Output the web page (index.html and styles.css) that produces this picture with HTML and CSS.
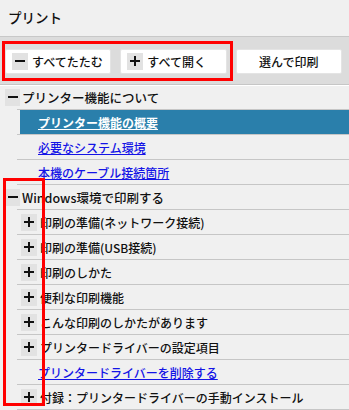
FILE: index.html
```html
<!DOCTYPE html>
<html lang="ja">

<head>
    <meta charset="UTF-8">
    <meta name="viewport" content="width=device-width, initial-scale=1.0">
    <title>プリント</title>
    <link rel="stylesheet" href="styles.css">
</head>

<body>
    <div class="header">プリント</div>

    <div class="toolbar">
        <button class="tool-btn"><span class="icon"><svg width="10" height="10" viewBox="0 0 10 10"><path d="M0 5H10" stroke="#111" stroke-width="2"/></svg></span>すべてたたむ</button>
        <button class="tool-btn"><span class="icon"><svg width="10" height="10" viewBox="0 0 10 10"><path d="M0 5H10M5 0V10" stroke="#111" stroke-width="2"/></svg></span>すべて開く</button>
        <button class="tool-btn center">選んで印刷</button>
    </div>

    <ul class="tree">
        <li>
            <div class="row top"><span class="icon"><svg width="10" height="10" viewBox="0 0 10 10"><path d="M0 5H10" stroke="#111" stroke-width="2"/></svg></span>プリンター機能について</div>
            <ul class="children">
                <li><a class="link active" href="#">プリンター機能の概要</a></li>
                <li><a class="link" href="#">必要なシステム環境</a></li>
                <li><a class="link" href="#">本機のケーブル接続箇所</a></li>
            </ul>
        </li>
        <li>
            <div class="row top"><span class="icon"><svg width="10" height="10" viewBox="0 0 10 10"><path d="M0 5H10" stroke="#111" stroke-width="2"/></svg></span>Windows環境で印刷する</div>
            <ul class="children">
                <li class="row sub"><span class="icon"><svg width="10" height="10" viewBox="0 0 10 10"><path d="M0 5H10M5 0V10" stroke="#111" stroke-width="2"/></svg></span>印刷の準備(ネットワーク接続)</li>
                <li class="row sub"><span class="icon"><svg width="10" height="10" viewBox="0 0 10 10"><path d="M0 5H10M5 0V10" stroke="#111" stroke-width="2"/></svg></span>印刷の準備(USB接続)</li>
                <li class="row sub"><span class="icon"><svg width="10" height="10" viewBox="0 0 10 10"><path d="M0 5H10M5 0V10" stroke="#111" stroke-width="2"/></svg></span>印刷のしかた</li>
                <li class="row sub"><span class="icon"><svg width="10" height="10" viewBox="0 0 10 10"><path d="M0 5H10M5 0V10" stroke="#111" stroke-width="2"/></svg></span>便利な印刷機能</li>
                <li class="row sub"><span class="icon"><svg width="10" height="10" viewBox="0 0 10 10"><path d="M0 5H10M5 0V10" stroke="#111" stroke-width="2"/></svg></span>こんな印刷のしかたがあります</li>
                <li class="row sub"><span class="icon"><svg width="10" height="10" viewBox="0 0 10 10"><path d="M0 5H10M5 0V10" stroke="#111" stroke-width="2"/></svg></span>プリンタードライバーの設定項目</li>
                <li><a class="link" href="#">プリンタードライバーを削除する</a></li>
                <li class="row sub"><span class="icon"><svg width="10" height="10" viewBox="0 0 10 10"><path d="M0 5H10M5 0V10" stroke="#111" stroke-width="2"/></svg></span>付録：プリンタードライバーの手動インストール</li>
            </ul>
        </li>
    </ul>

    <!-- red annotation boxes -->
    <div class="mark mark-toolbar"></div>
    <div class="mark mark-tree"></div>
</body>

</html>
```

FILE: styles.css
```css
body {
    margin: 0;
    background-color: #f0f0f0;
    color: #111111;
    font-family: "Noto Sans CJK JP", "Noto Sans", sans-serif;
    font-size: 12px;
    font-weight: 500;
    overflow: hidden;
}

.header {
    height: 36px;
    line-height: 34px;
    padding-left: 8px;
    font-size: 13.5px;
    border-bottom: 1px solid #c8c8c8;
}

.toolbar {
    display: flex;
    align-items: center;
    gap: 9px;
    height: 46px;
    padding: 1px 7px 0 5px;
    background-color: #dcdcdc;
    border-bottom: 1px solid #c6c6c6;
    box-shadow: 0 1px 0 #ffffff;
}

.tool-btn {
    flex: 1;
    display: flex;
    align-items: center;
    height: 25px;
    padding: 0 6px;
    background-color: #ffffff;
    border: 1px solid #e4e4e4;
    border-radius: 2px;
    font-family: inherit;
    font-size: 12px;
    font-weight: 500;
    color: #111111;
}

.tool-btn.center {
    justify-content: center;
}

.icon {
    display: inline-flex;
    align-items: center;
    justify-content: center;
    width: 16px;
    height: 17px;
    margin-right: 4px;
    background-color: #e2e2e2;
    flex-shrink: 0;
}

.tree,
.children {
    list-style: none;
    margin: 0;
    padding: 0;
}

.row {
    display: flex;
    align-items: center;
    height: 24px;
}

.row.top {
    padding-left: 5px;
    font-size: 12.5px;
}

.row.top .icon {
    width: 15px;
    margin-right: 2px;
}

.children {
    margin-left: 17px;
    border-top: 1px solid #c6c6c6;
}

.children > li {
    border-bottom: 1px solid #c6c6c6;
    height: 24px;
}

.row.sub {
    padding-left: 4px;
}

.row.sub .icon {
    margin-right: 3px;
}

.link {
    display: flex;
    align-items: center;
    height: 24px;
    margin-left: 3px;
    padding-left: 18px;
    color: #1414e6;
    text-decoration: underline;
}

.link.active {
    background-color: #2a7fab;
    color: #ffffff;
    font-weight: bold;
}

.mark {
    position: absolute;
    border: 3px solid #ff0000;
    box-sizing: border-box;
}

.mark-toolbar {
    left: 2px;
    top: 41px;
    width: 231px;
    height: 40px;
}

.mark-tree {
    left: 3px;
    top: 178px;
    width: 42px;
    height: 228px;
}
```
